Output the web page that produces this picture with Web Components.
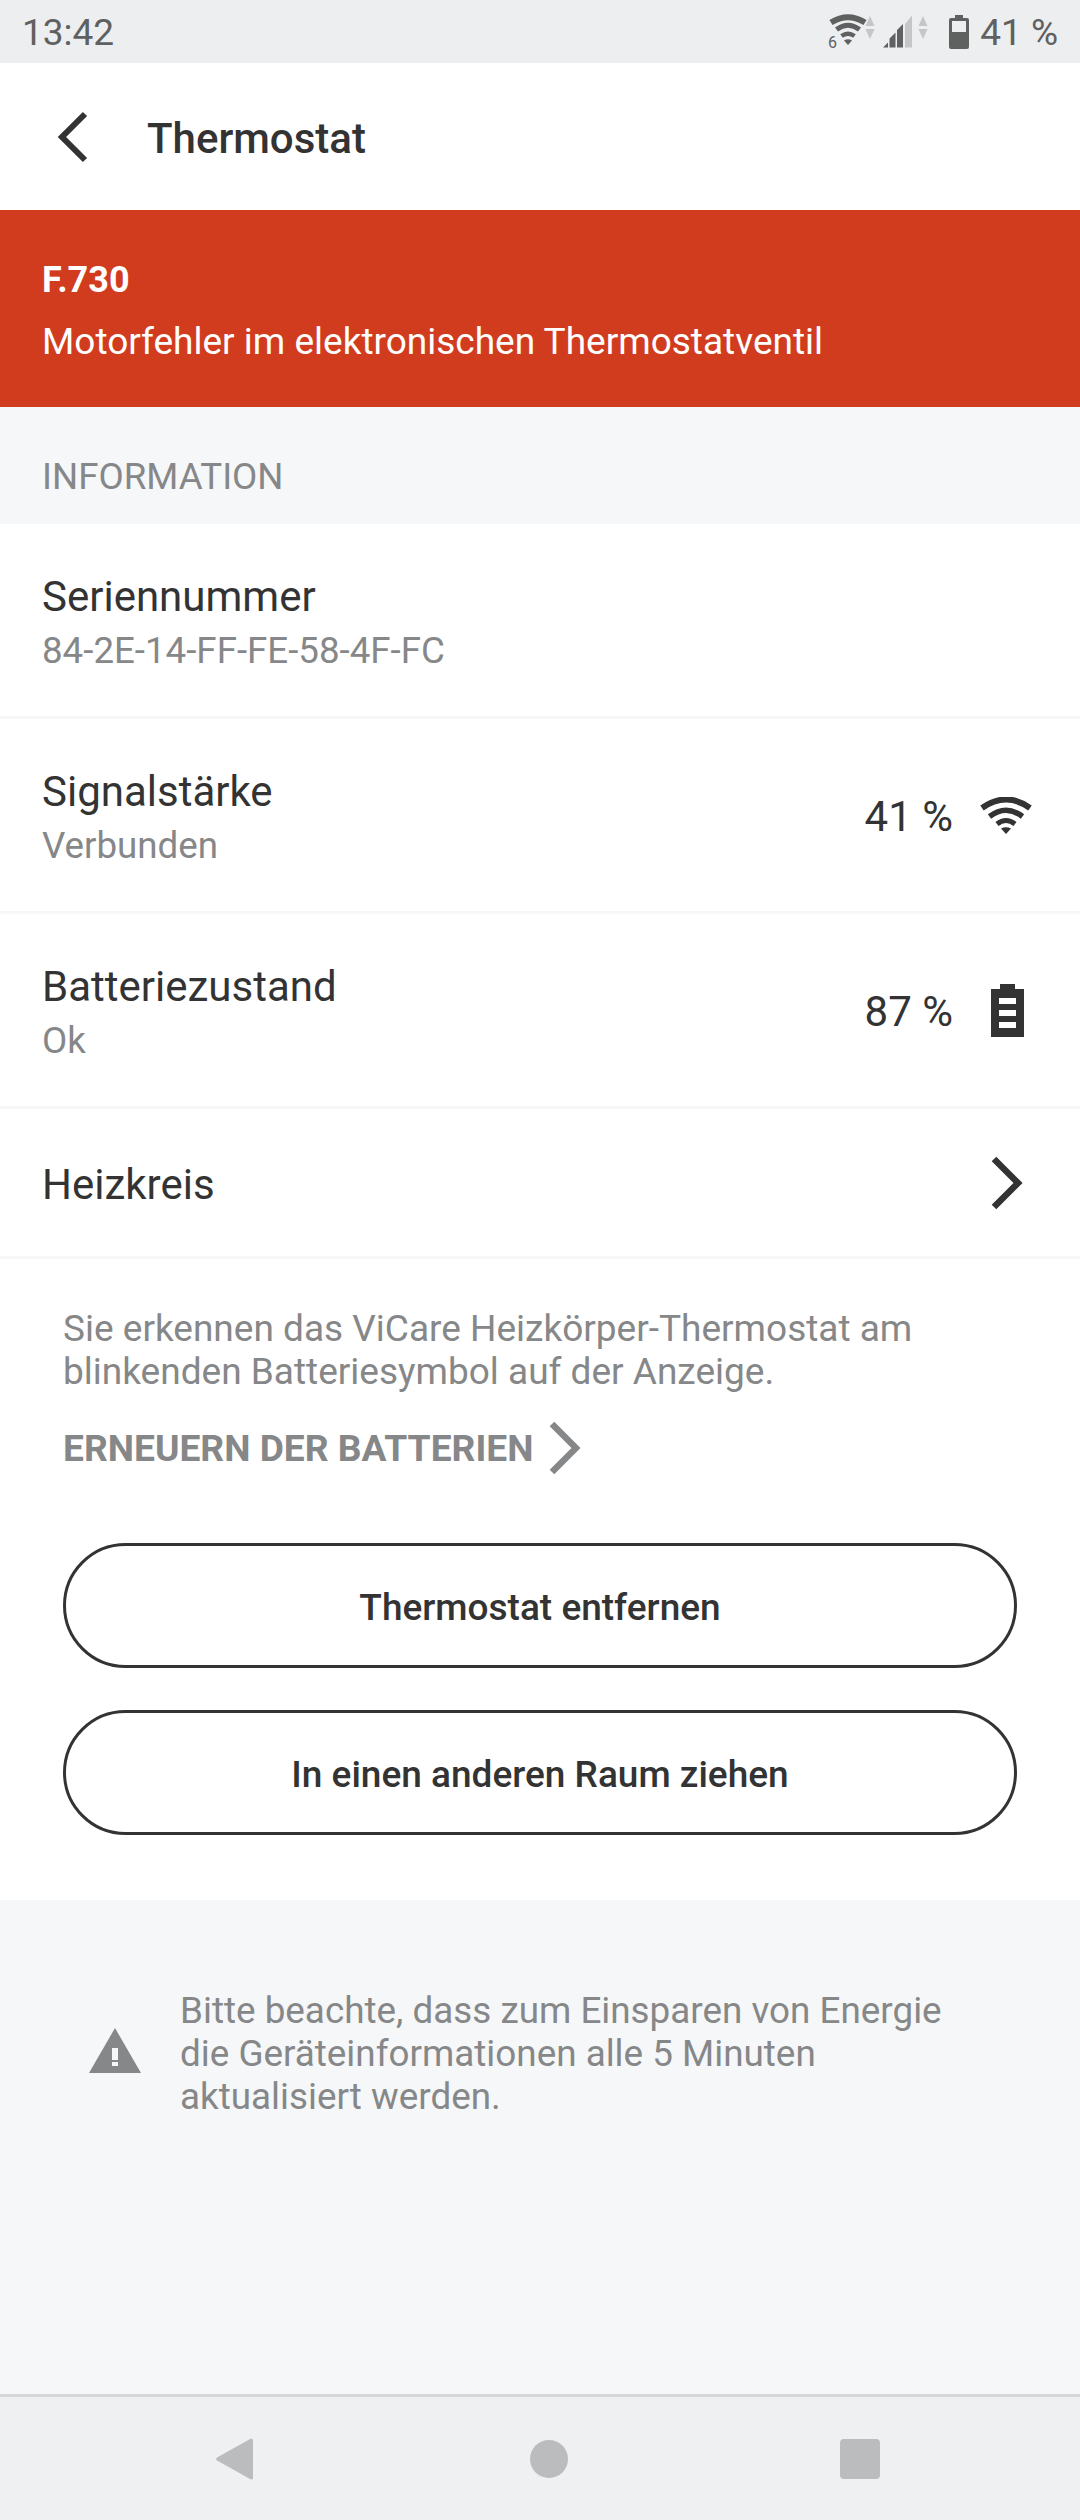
<!DOCTYPE html>
<html lang="de"><head><meta charset="utf-8"><title>Thermostat</title>
<style>
html,body{margin:0;padding:0;background:#f6f7f9;font-family:Roboto,"Liberation Sans",sans-serif;}
app-page{height:2520px}
</style></head><body>
<app-page>
<status-bar></status-bar>
<app-header>Thermostat</app-header>
<error-banner code="F.730">Motorfehler im elektronischen Thermostatventil</error-banner>
<section-label>INFORMATION</section-label>
<info-row title="Seriennummer" sub="84-2E-14-FF-FE-58-4F-FC"></info-row>
<info-row title="Signalstärke" sub="Verbunden" value="41 %" icon="wifi"></info-row>
<info-row title="Batteriezustand" sub="Ok" value="87 %" icon="battery"></info-row>
<info-row title="Heizkreis" icon="chevron" compact></info-row>
<hint-panel>
<span slot="text">Sie erkennen das ViCare Heizkörper-Thermostat am<br>blinkenden Batteriesymbol auf der Anzeige.</span>
<span slot="link">ERNEUERN DER BATTERIEN</span>
<pill-button>Thermostat entfernen</pill-button>
<pill-button>In einen anderen Raum ziehen</pill-button>
</hint-panel>
<note-box>Bitte beachte, dass zum Einsparen von Energie<br>die Geräteinformationen alle 5 Minuten<br>aktualisiert werden.</note-box>
<nav-bar></nav-bar>
</app-page>
<script>
function def(name,html){
  customElements.define(name,class extends HTMLElement{
    connectedCallback(){
      if(this.shadowRoot)return;
      const r=this.attachShadow({mode:'open'});
      r.innerHTML=typeof html==='function'?html(this):html;
    }
  });
}
def('app-page',`<style>:host{display:flex;flex-direction:column;width:1080px;overflow:hidden;background:#f6f7f9}</style><slot></slot>`);
def('status-bar',`<style>
:host{display:flex;align-items:center;height:63px;background:#edeef0;color:#5f6060;font-size:37px;box-sizing:border-box;padding:2px 22px 0 22px;flex:none}
.t{flex:1}
svg{display:block;position:relative;top:-1px}
</style>
<span class="t">13:42</span>
<svg width="110" height="44" viewBox="0 -4 110 44" style="margin-right:11px">
<g fill="none" stroke="#5f6060">
<path d="M3 8.500Q20 -2 37 8.500" stroke-width="6"/>
<path d="M8.500 15.500Q20 7 31.500 15.500" stroke-width="5"/>
<path d="M13.500 22Q20 17.500 26.500 22" stroke-width="4.500"/>
</g>
<path d="M16 26.500Q20 24 24 26.500L20 31z" fill="#5f6060"/>
<text x="0" y="34" font-size="16" font-family="Roboto" fill="#5f6060">6</text>
<path d="M42 2l4.500 10h-9zM42 25l4.500-10h-9z" fill="#c4c6c7"/>
<path d="M55 33.500l5-5v5zM61.500 33.500v-9l6-6v15zM69 33.500V16l6-6v23.500z" fill="#5f6060"/>
<path d="M77 33.500V10l7-8.500v32z" fill="#c4c6c7"/>
<path d="M95 2l4.500 10h-9zM95 25l4.500-10h-9z" fill="#c4c6c7"/>
</svg>
<svg width="20" height="34" viewBox="0 0 20 34" style="margin-right:11px"><path d="M6 0h8v3h4a2 2 0 0 1 2 2v27a2 2 0 0 1-2 2H2a2 2 0 0 1-2-2V5a2 2 0 0 1 2-2h4z" fill="#5f6060"/><rect x="3" y="6" width="14" height="11" fill="#edeef0"/></svg>
<span>41 %</span>`);
def('app-header',`<style>
:host{display:flex;align-items:center;height:147px;background:#fff;color:#333;flex:none;font-size:42px;font-weight:500;box-sizing:border-box;padding:0 0 0 56px}
svg{margin-right:57px;flex:none}
span{padding-top:4px}
</style><svg width="34" height="52" viewBox="0 0 34 52"><path d="M29 3L6 26l23 23" fill="none" stroke="#333" stroke-width="6"/></svg><span><slot></slot></span>`);
def('error-banner',h=>`<style>
:host{display:block;height:197px;background:#d13c1f;color:#fff;flex:none;box-sizing:border-box;padding:48px 42px 0}
.c{font-weight:700;font-size:36px;line-height:44px;margin-bottom:18px}
.m{font-size:37px;line-height:44px}
</style><div class="c">${h.getAttribute('code')}</div><div class="m"><slot></slot></div>`);
def('section-label',`<style>
:host{display:flex;align-items:center;height:117px;box-sizing:border-box;padding:22px 42px 0;color:#868788;font-size:36.700px;flex:none;background:#f6f7f9}
</style><slot></slot>`);
const icons={
wifi:`<svg width="52" height="37" viewBox="0 0 52 37" style="margin-right:48px"><g fill="none" stroke="#333"><path d="M2 11Q26 -6 50 11" stroke-width="6"/><path d="M9.500 19.500Q26 7 42.500 19.500" stroke-width="5.500"/><path d="M17 27Q26 20 35 27" stroke-width="5"/></g><path d="M21 31.500Q26 29 31 31.500L26 37z" fill="#333"/></svg>`,
battery:`<svg width="33" height="53" viewBox="0 0 33 53" style="margin-right:56px"><path fill-rule="evenodd" d="M9 0h15v5h9v48H0V5h9zM8 14v6h17v-6zM8 26v6h17v-6zM8 38v6h17v-6z" fill="#333"/></svg>`,
chevron:`<svg width="32" height="54" viewBox="0 0 32 54" style="margin-right:57px"><path d="M3 3l24 24L3 51" fill="none" stroke="#333" stroke-width="6.500"/></svg>`};
const ml={wifi:27,battery:38,chevron:0};
def('info-row',h=>{
 const v=h.getAttribute('value'),ic=h.getAttribute('icon'),s=h.getAttribute('sub'),c=h.hasAttribute('compact');
 return `<style>
:host{display:flex;align-items:center;height:${c?150:195}px;background:#fff;border-bottom:3px solid #f6f7f9;box-sizing:border-box;padding-left:42px;flex:none;color:#333}
.l{flex:1;padding-top:${c?5:4}px}.t{font-size:42px;line-height:54px;position:relative;top:${s?-1:0}px}.s{font-size:36.700px;line-height:44px;color:#868788;margin-top:4px}
.v{font-size:42px;padding-top:3px}
svg{flex:none;display:block}
.ic{display:block}
</style><div class="l"><div class="t">${h.getAttribute('title')}</div>${s?`<div class="s">${s}</div>`:''}</div>${v?`<div class="v">${v}</div>`:''}${ic?`<span class="ic" style="margin-left:${ml[ic]}px">${icons[ic]}</span>`:''}`;});
def('hint-panel',`<style>
:host{display:block;background:#fff;height:641px;box-sizing:border-box;padding:48px 63px 0;flex:none}
.x{font-size:37px;line-height:43px;color:#868788}
.k{display:flex;align-items:center;margin-top:27px;height:56px;margin-bottom:67px;font-size:37.200px;font-weight:700;color:#868788}
.k svg{margin-left:15px}
.b{display:flex;flex-direction:column;gap:42px}
</style><div class="x"><slot name="text"></slot></div>
<div class="k"><slot name="link"></slot><svg width="32" height="54" viewBox="0 0 32 54"><path d="M4 3l24 24L4 51" fill="none" stroke="#868788" stroke-width="6.500"/></svg></div>
<div class="b"><slot></slot></div>`);
def('pill-button',`<style>
:host{display:flex;align-items:center;justify-content:center;height:125px;box-sizing:border-box;border:3px solid #333;border-radius:63px;color:#333;font-size:37px;font-weight:500;background:#fff;padding-top:3px}
</style><slot></slot>`);
def('note-box',`<style>
:host{display:flex;flex:1;align-items:flex-start;box-sizing:border-box;padding:89px 0 0 89px;color:#868788;font-size:36.850px;line-height:43px}
svg{flex:none;margin:39px 39px 0 0;display:block}
</style><svg width="52" height="46" viewBox="0 0 52 46"><path fill-rule="evenodd" d="M26 0l26 45H0zM23 20v12h6V20zM23 34v4h6v-4z" fill="#868788"/></svg><div><slot></slot></div>`);
def('nav-bar',`<style>
:host{display:flex;align-items:center;justify-content:space-between;height:126px;background:#eff0f2;border-top:3px solid #d6d7d9;box-sizing:border-box;padding:0 200px 0 216px;flex:none}
svg{display:block}
</style>
<svg width="37" height="42" viewBox="0 0 37 42"><path d="M35 0.500a2 2 0 0 1 2 1.500v38a2 2 0 0 1-2 1.500L1 22.500a2 2 0 0 1 0-3z" fill="#bbbcbd"/></svg>
<svg width="38" height="38" viewBox="0 0 38 38" style="margin-left:5px"><circle cx="19" cy="19" r="19" fill="#bbbcbd"/></svg>
<svg width="40" height="40" viewBox="0 0 40 40"><rect width="40" height="40" rx="4" fill="#bbbcbd"/></svg>`);
</script>
</body></html>
